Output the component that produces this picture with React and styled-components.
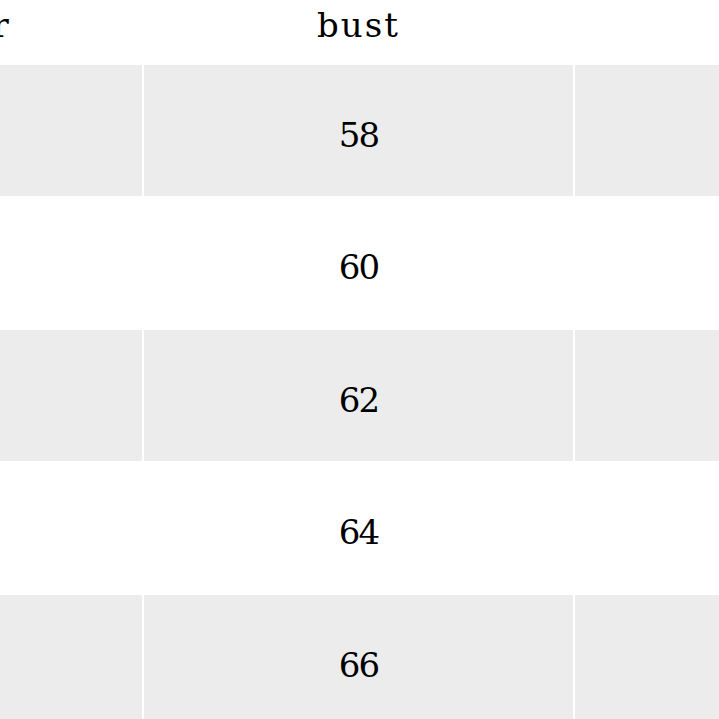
import styled, { createGlobalStyle } from "styled-components";

const GlobalStyle = createGlobalStyle`
  html, body {
    margin: 0;
    padding: 0;
    background: #fff;
  }
  body {
    overflow: hidden;
  }
`;

const columns = ["shoulder", "bust", "length"];
const rows = [
  ["44", "58", "66"],
  ["45", "60", "67"],
  ["46", "62", "68"],
  ["47", "64", "69"],
  ["48", "66", "70"],
];

const App = () => {
  return (
    <>
      <GlobalStyle />
      <Viewport>
        <SizeTable>
          <thead>
            <tr>
              {columns.map((col) => (
                <HeadCell key={col}>{col}</HeadCell>
              ))}
            </tr>
          </thead>
          <tbody>
            {rows.map((row, i) => (
              <tr key={i}>
                {row.map((val, j) => (
                  <Cell key={j} $striped={i % 2 === 0}>
                    {val}
                  </Cell>
                ))}
              </tr>
            ))}
          </tbody>
        </SizeTable>
      </Viewport>
    </>
  );
};
export default App;

const Viewport = styled.div`
  width: 719px;
  height: 719px;
  overflow: hidden;
`;

const SizeTable = styled.table`
  border-collapse: separate;
  border-spacing: 2px;
  margin-left: -289px;
  table-layout: fixed;
  width: 1295px;
  font-family: "DejaVu Serif", "Liberation Serif", serif;
  font-size: 34px;
  color: #000;
`;

const HeadCell = styled.th`
  box-sizing: border-box;
  width: 429px;
  height: 61px;
  padding: 3px 0 0;
  vertical-align: top;
  font-weight: normal;
  text-align: center;
  letter-spacing: 2px;
  background: #fff;
`;

const Cell = styled.td`
  box-sizing: border-box;
  height: 130.5px;
  padding: 9px 0 0;
  vertical-align: middle;
  text-align: center;
  letter-spacing: -2px;
  background: ${(p) => (p.$striped ? "#ececec" : "#fff")};
`;
